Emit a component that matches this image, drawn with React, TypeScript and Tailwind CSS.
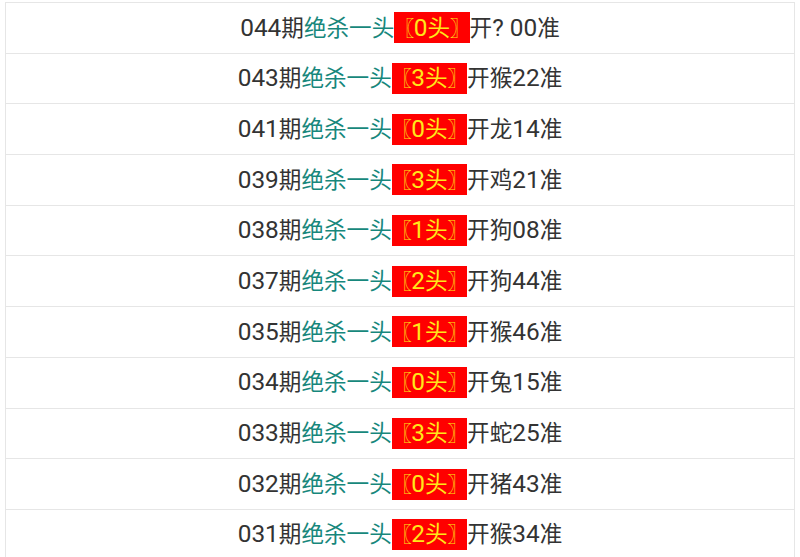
const rows = [
  { qi: "044", tou: "0", kai: "开? 00准" },
  { qi: "043", tou: "3", kai: "开猴22准" },
  { qi: "041", tou: "0", kai: "开龙14准" },
  { qi: "039", tou: "3", kai: "开鸡21准" },
  { qi: "038", tou: "1", kai: "开狗08准" },
  { qi: "037", tou: "2", kai: "开狗44准" },
  { qi: "035", tou: "1", kai: "开猴46准" },
  { qi: "034", tou: "0", kai: "开兔15准" },
  { qi: "033", tou: "3", kai: "开蛇25准" },
  { qi: "032", tou: "0", kai: "开猪43准" },
  { qi: "031", tou: "2", kai: "开猴34准" },
];

// latin runs a bit larger than the CJK ones, like the phone font
const Mixed = ({ text }: { text: string }) => {
  const parts = text.match(/[\x00-\x7f]+|[^\x00-\x7f]+/g) || [];
  return (
    <>
      {parts.map((p, i) =>
        /[\x00-\x7f]/.test(p) ? (
          <span key={i} className="text-[24.4px] whitespace-pre">
            {p}
          </span>
        ) : (
          <span key={i} className="text-[22.6px]">
            {p}
          </span>
        )
      )}
    </>
  );
};

const App = () => {
  return (
    <div className="w-[800px] h-[557px] overflow-hidden bg-white pt-[2px]">
      <div
        className="mx-[5px] border-l border-r border-t border-[#e6e6e6]"
        style={{ fontFamily: '"Roboto", "Noto Sans CJK SC", sans-serif' }}
      >
        {rows.map((r) => (
          <div
            key={r.qi}
            className="h-[50.7px] flex items-center justify-center border-b border-[#e6e6e6] text-[#333333] whitespace-nowrap"
          >
            <span className="flex items-baseline">
              <Mixed text={r.qi + "期"} />
              <span className="text-[#17877c] text-[22.6px]">绝杀一头</span>
            </span>
            {/* red tag */}
            <span className="flex items-center h-[31px] bg-[#ff0000] text-[#ffe81a]">
              <span className="flex items-baseline">
                <span className="text-[20px] font-bold tracking-[-0.5px]">〖</span>
                <span className="text-[24.4px]">{r.tou}</span>
                <span className="text-[22.6px]">头</span>
                <span className="text-[20px] font-bold tracking-[-0.5px]">〗</span>
              </span>
            </span>
            <span className="flex items-baseline">
              <Mixed text={r.kai} />
            </span>
          </div>
        ))}
      </div>
    </div>
  );
};

export default App;
